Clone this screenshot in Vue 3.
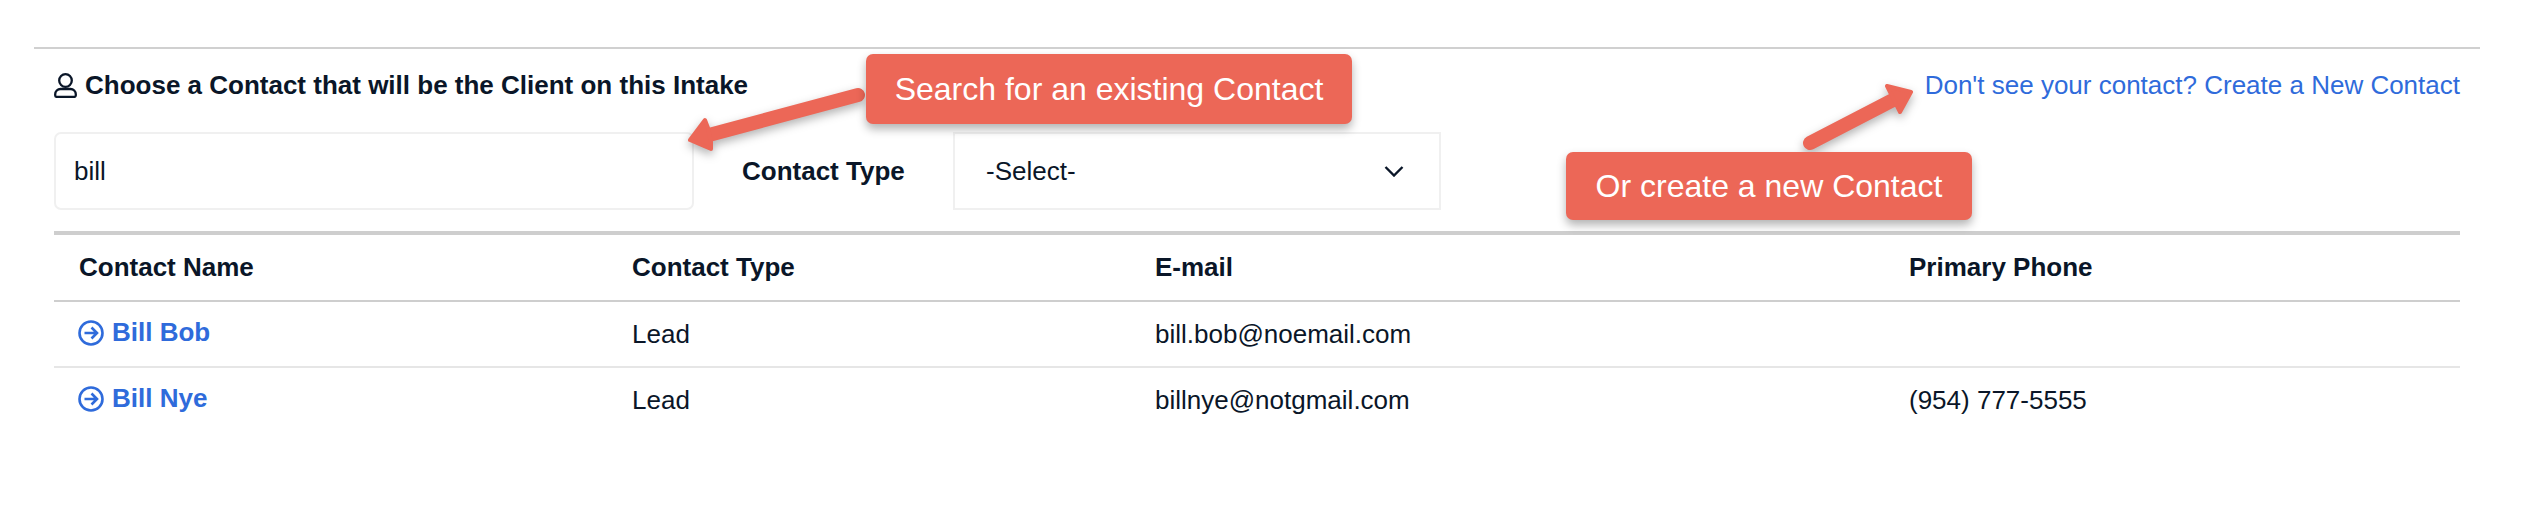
<template>
  <div class="page">
    <div class="panel">
      <div class="title-row">
        <h2 class="title">
          <svg class="user-icon" viewBox="0 0 23 25" fill="none" stroke="currentColor" stroke-width="2.3">
            <circle cx="11.5" cy="7.5" r="6.3" />
            <path d="M6.5 16h10a5.3 5.3 0 0 1 5.3 5.3v.9a1.7 1.7 0 0 1-1.7 1.7H2.900A1.700 1.700 0 0 1 1.200 22.200v-.9A5.300 5.300 0 0 1 6.500 16z" />
          </svg>
          Choose a Contact that will be the Client on this Intake
        </h2>
        <a class="new-link" href="#" @click.prevent>Don't see your contact? Create a New Contact</a>
      </div>

      <div class="filters">
        <input class="search" type="text" value="bill" />
        <label class="type-label">Contact Type</label>
        <div class="select">
          <span>-Select-</span>
          <svg class="chevron" viewBox="0 0 20 11" fill="none" stroke="currentColor" stroke-width="2.4">
            <path d="M1.500 1l8.500 8.500L18.500 1" />
          </svg>
        </div>
      </div>

      <table class="contacts">
        <thead>
          <tr>
            <th v-for="col in columns" :key="col">{{ col }}</th>
          </tr>
        </thead>
        <tbody>
          <tr v-for="row in rows" :key="row.name">
            <td>
              <a class="name" href="#" @click.prevent>
                <svg class="go-icon" viewBox="0 0 26 26" fill="none" stroke="currentColor" stroke-width="2.600">
                  <circle cx="13" cy="13" r="11.500" />
                  <path d="M6.500 13h12.500M13.500 7.500L19 13l-5.500 5.500" />
                </svg>
                {{ row.name }}
              </a>
            </td>
            <td>{{ row.type }}</td>
            <td>{{ row.email }}</td>
            <td>{{ row.phone }}</td>
          </tr>
        </tbody>
      </table>
    </div>

    <svg class="arrows" viewBox="0 0 2522 532">
      <g fill="#ec6757" stroke="#ec6757" stroke-linejoin="round" stroke-linecap="round">
        <line x1="858" y1="95" x2="709" y2="135" stroke-width="14" />
        <polygon points="690,140 705,120 708,128 711,142 711,149" stroke-width="4" />
        <line x1="1810" y1="143" x2="1893" y2="100" stroke-width="14" />
        <polygon points="1911,92 1887,86 1891,94 1897,106 1900,112" stroke-width="4" />
      </g>
    </svg>

    <div class="callout callout-search">Search for an existing Contact</div>
    <div class="callout callout-new">Or create a new Contact</div>
  </div>
</template>

<script setup>
const columns = ['Contact Name', 'Contact Type', 'E-mail', 'Primary Phone']

const rows = [
  { name: 'Bill Bob', type: 'Lead', email: 'bill.bob@noemail.com', phone: '' },
  { name: 'Bill Nye', type: 'Lead', email: 'billnye@notgmail.com', phone: '(954) 777-5555' }
]
</script>

<style scoped>
.page {
  position: relative;
  width: 2522px;
  height: 532px;
  padding: 47px 42px 0 34px;
  box-sizing: border-box;
  background: #fff;
  font-family: "Liberation Sans", Arial, sans-serif;
  font-size: 26px;
  color: #0a1628;
  overflow: hidden;
}
.panel {
  border-top: 2px solid #d0d0d0;
  padding: 0 20px;
}
.title-row {
  display: flex;
  justify-content: space-between;
  align-items: flex-start;
  height: 83px;
  padding-top: 21px;
  box-sizing: border-box;
}
.title {
  display: flex;
  align-items: center;
  gap: 8px;
  margin: 0;
  font-size: 26px;
  font-weight: 700;
}
.user-icon {
  width: 23px;
  height: 25px;
}
.new-link {
  color: #2f6bdb;
  text-decoration: none;
}
.filters {
  display: flex;
  align-items: center;
  height: 78px;
}
.search {
  width: 640px;
  height: 78px;
  box-sizing: border-box;
  padding: 0 18px;
  border: 2px solid #f0f0f0;
  border-radius: 7px;
  outline: none;
  font: inherit;
  color: inherit;
}
.type-label {
  margin-left: 48px;
  width: 211px;
  font-weight: 700;
}
.select {
  display: flex;
  align-items: center;
  justify-content: space-between;
  width: 488px;
  height: 78px;
  box-sizing: border-box;
  padding: 0 35px 0 31px;
  border: 2px solid #f0f0f0;
}
.chevron {
  width: 20px;
  height: 11px;
}
.contacts {
  width: 100%;
  margin-top: 21px;
  border-collapse: collapse;
  table-layout: fixed;
}
th,
td {
  padding: 0 0 0 25px;
  text-align: left;
}
th {
  height: 65px;
  font-weight: 700;
  border-top: 4px solid #cecece;
  border-bottom: 2px solid #cecece;
}
td {
  height: 64px;
}
tbody tr + tr td {
  border-top: 2px solid #e6e6e6;
}
th:nth-child(1) {
  width: 528px;
}
th:nth-child(2) {
  width: 498px;
}
th:nth-child(3) {
  width: 729px;
}
.name {
  display: inline-flex;
  align-items: center;
  gap: 8px;
  margin-left: -1px;
  padding-top: 2px;
  color: #2f6bdb;
  font-weight: 700;
  text-decoration: none;
}
.go-icon {
  width: 26px;
  height: 26px;
}
.arrows {
  position: absolute;
  top: 0;
  left: 0;
  width: 2522px;
  height: 532px;
  filter: drop-shadow(0 4px 5px rgba(0, 0, 0, 0.3));
}
.callout {
  position: absolute;
  display: flex;
  align-items: center;
  justify-content: center;
  box-sizing: border-box;
  background: #ec6757;
  color: #fff;
  font-size: 32px;
  border-radius: 7px;
  box-shadow: 0 5px 10px rgba(0, 0, 0, 0.3);
}
.callout-search {
  left: 866px;
  top: 54px;
  width: 486px;
  height: 70px;
}
.callout-new {
  left: 1566px;
  top: 152px;
  width: 406px;
  height: 68px;
}
</style>
